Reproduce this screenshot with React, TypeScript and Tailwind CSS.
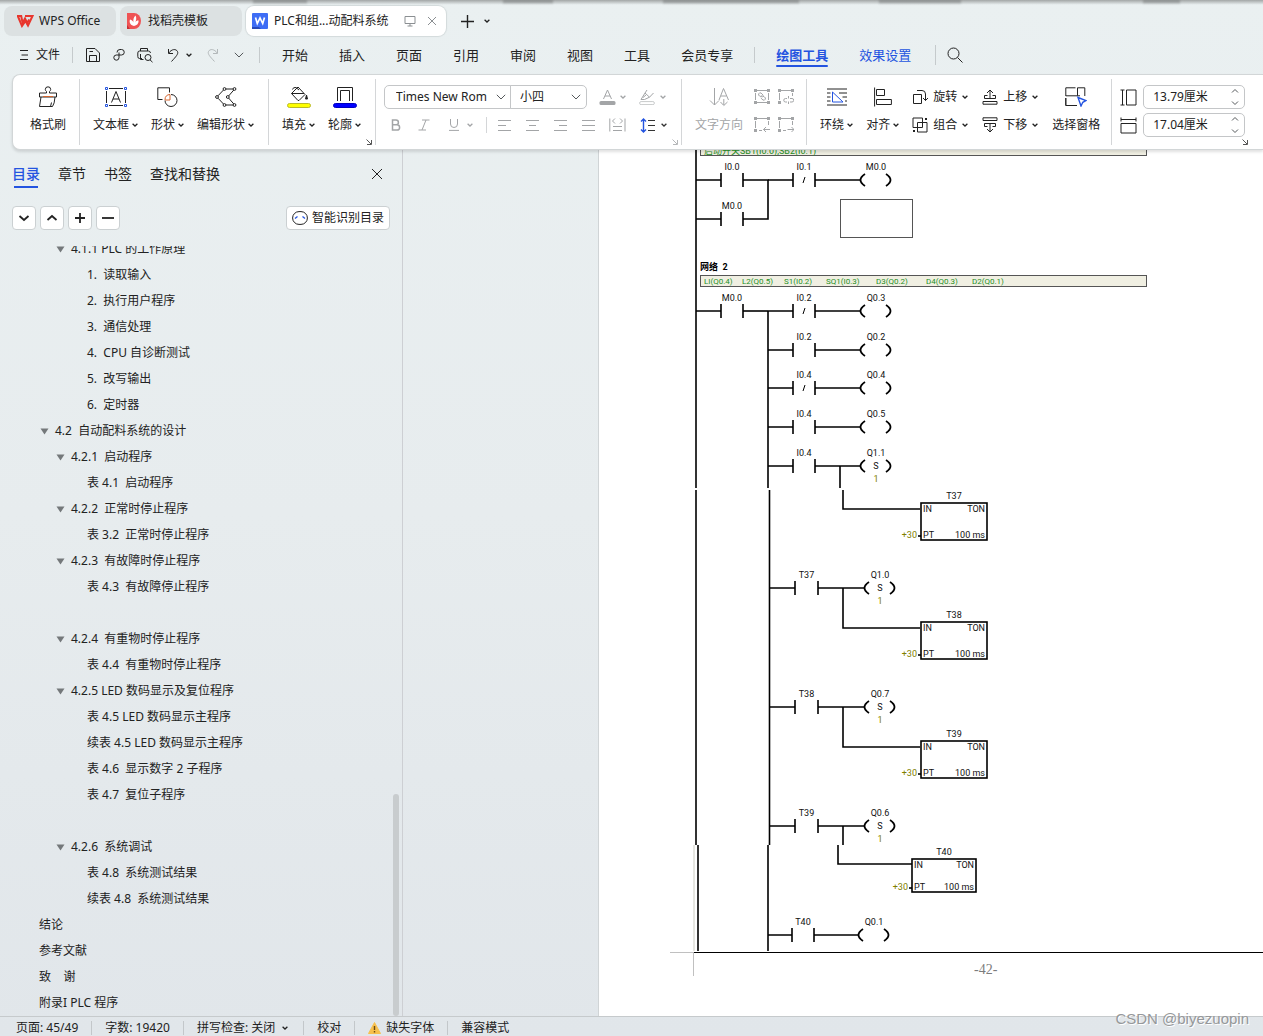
/**
 * WPS Writer window - tab strip, drawing ribbon, outline pane and page view
 */

import { useState } from 'react';
import type { ReactNode } from 'react';

const BLUE = '#2454e0';

/* ---------- small shared pieces ---------- */

function Icon({ w = 16, h = 16, className = '', children }: { w?: number; h?: number; className?: string; children: ReactNode }) {
  return (
    <svg width={w} height={h} viewBox={`0 0 ${w} ${h}`} fill="none" stroke="currentColor" strokeWidth="1" className={`shrink-0 ${className}`} aria-hidden="true">
      {children}
    </svg>
  );
}

function Caret({ className = '' }: { className?: string }) {
  return (
    <Icon w={6} h={6} className={className}>
      <path d="M0.6 1.8L3 4L5.4 1.8" strokeWidth="1.3" />
    </Icon>
  );
}

function WideCaret() {
  return (
    <Icon w={10} h={6} className="text-[#55595c]">
      <path d="M0.8 0.8L5 5L9.2 0.8" />
    </Icon>
  );
}

function Launcher({ className = '' }: { className?: string }) {
  return (
    <button className={`absolute right-1 bottom-1 ${className}`} aria-label="更多设置">
      <Icon w={6} h={6}>
        <path d="M0.5 0.5L5 5M5.5 1V5.5H1" strokeWidth="1" />
      </Icon>
    </button>
  );
}

function BigButton({ label, caret = false, icon, className = '' }: { label: string; caret?: boolean; icon: ReactNode; className?: string }) {
  return (
    <button className={`flex flex-col items-center gap-1 ${className}`}>
      <span className="flex h-6 items-center justify-center">{icon}</span>
      <span className="flex h-6 items-center gap-[3px] whitespace-nowrap">
        {label}
        {caret && <Caret />}
      </span>
    </button>
  );
}

function RowButton({ label, icon }: { label: string; icon: ReactNode }) {
  return (
    <button className="flex h-6 items-center gap-[5px] pr-px whitespace-nowrap">
      {icon}
      {label}
      <Caret />
    </button>
  );
}

function Group({ className = '', children }: { className?: string; children: ReactNode }) {
  return (
    <div className={`relative flex h-full shrink-0 pt-[10px] after:absolute after:top-1 after:right-0 after:bottom-1 after:w-px after:bg-[#d4d6d8] ${className}`}>
      {children}
    </div>
  );
}

/* ---------- window tabs ---------- */

// Patches of darker shadow cast by the window behind
const shadowPatches = ['ml-[253px] w-[54px]', 'ml-[196px] w-[50px]', 'ml-[110px] w-[136px]', 'ml-[80px] w-[82px]', 'ml-[182px] w-[37px]'];

function TopShadow() {
  return (
    <div className="flex h-[6px] shrink-0 bg-linear-to-b from-[#a2a6a6] to-transparent to-80%">
      {shadowPatches.map((p) => (
        <span key={p} className={`h-1 shrink-0 bg-linear-to-b from-[#00000040] to-[#00000018] blur-[1px] ${p}`} />
      ))}
    </div>
  );
}

function TabStrip() {
  return (
    <div className="flex h-[30px] items-stretch gap-1 pl-1">
      <button className="flex w-28 items-center gap-[5px] rounded-lg bg-[#dce1e2] pl-3">
        <Icon w={18} h={14} className="text-[#e8362d]">
          <path d="M1 2H5.2L6.6 9L9 4.5L11.2 9L13.2 5.5" strokeWidth="2" />
          <path d="M9 2H16.5L12 11.5L9.5 7L6 12L2 2.5" strokeWidth="2" />
        </Icon>
        WPS Office
      </button>
      <button className="flex w-[122px] items-center gap-[7px] rounded-lg bg-[#dce1e2] pl-[7px]">
        <Icon w={14} h={16}>
          <path d="M0 0H7A7 8 0 0 1 7 16H0Z" fill="#ef5354" stroke="none" />
          <path d="M7 13C3 12 2 9 3 6.5C5 7 6 8 6.5 9.5C6 7 6.5 4.5 8.5 2.5C9.8 5 9.3 7.5 8 9.5C9 8 10 7.4 11.6 7.5C11.8 10.5 10 12.5 7 13Z" fill="#fff" stroke="none" />
          <path d="M0 12L3 16H0Z" fill="#c92f33" stroke="none" />
        </Icon>
        找稻壳模板
      </button>
      <div className="flex w-[200px] items-center rounded-lg bg-white pl-[6px] shadow-[0_0_1px_1px_#d3dadb]">
        <Icon w={16} h={16}>
          <rect width="16" height="16" rx="1" fill="#3e6df5" stroke="none" />
          <path d="M0 14H7L9 16H0Z" fill="#2748b8" stroke="none" />
          <path d="M3.5 4.5L5.3 10.5L8 5L10.7 10.5L12.5 4.5" stroke="#fff" strokeWidth="1.7" />
        </Icon>
        <span className="ml-[6px] whitespace-nowrap">PLC和组...动配料系统</span>
        <Icon w={12} h={12} className="ml-auto text-[#8b8f92]">
          <path d="M1 1.5H11V8.5H1ZM3.5 11H8.5M6 8.5V11" />
        </Icon>
        <button className="mr-[9px] ml-[11px] text-[#8b8f92]" aria-label="关闭标签">
          <Icon w={10} h={10}>
            <path d="M1 1L9 9M9 1L1 9" />
          </Icon>
        </button>
      </div>
      <button className="ml-[10px]" aria-label="新建">
        <Icon w={15} h={15}>
          <path d="M7.5 1V14M1 7.5H14" strokeWidth="1.4" />
        </Icon>
      </button>
      <button className="ml-[5px]" aria-label="标签列表">
        <Caret />
      </button>
    </div>
  );
}

/* ---------- quick access and ribbon tabs ---------- */

const ribbonTabs = ['开始', '插入', '页面', '引用', '审阅', '视图', '工具', '会员专享'];

function MenuBar() {
  return (
    <div className="flex h-[38px] items-center pl-[19px]">
      <button className="flex items-center gap-[7px] text-[12px]">
        <Icon w={10} h={12}>
          <path d="M1 1.5H9M2.5 6H9M1 10.5H9" />
        </Icon>
        文件
      </button>
      <span className="ml-3 h-4 w-px bg-[#c5cacc]" />
      <button className="ml-3" aria-label="保存">
        <Icon>
          <path d="M1.5 1.5H10L14.5 6V14.5H1.5ZM4.5 14.5V8.5H11.5V14.5M4.5 4.5H8" />
        </Icon>
      </button>
      <button className="ml-[10px]" aria-label="输出为PDF">
        <Icon>
          <path d="M6 5.5Q6 2.5 9 2.5H10.5A2.7 2.7 0 0 1 10.5 8H5.2A2.6 2.6 0 1 0 8 10.8V5.5" />
        </Icon>
      </button>
      <button className="ml-[10px]" aria-label="打印预览">
        <Icon>
          <path d="M3.5 4V1.5H10.5V4M5 11.5H2.5Q0.8 11.5 0.8 9.5V6Q0.8 4 2.5 4H11.5Q13.2 4 13.5 6M3.5 7V12.5H6.5" />
          <circle cx="11" cy="10.5" r="3" />
          <path d="M13 12.8L15.5 15.2" />
        </Icon>
      </button>
      <button className="ml-3" aria-label="撤销">
        <Icon>
          <path d="M3.5 2V6.5H8M3.8 6C6.5 2 11 1.5 12.5 4.5C13.6 7 11 9.5 6.5 14.5" />
        </Icon>
      </button>
      <button className="ml-[5px]" aria-label="撤销列表">
        <Caret />
      </button>
      <button className="ml-[13px] text-[#b3b8ba]" aria-label="恢复">
        <Icon>
          <path d="M12.5 2V6.5H8M12.2 6C9.5 2 5 1.5 3.5 4.5C2.4 7 5 9.5 9.5 14.5" />
        </Icon>
      </button>
      <button className="ml-[13px]" aria-label="自定义工具栏">
        <WideCaret />
      </button>
      <span className="ml-[15px] h-4 w-px bg-[#c5cacc]" />
      <nav className="ml-[22px] flex items-center gap-[31px] text-[13px] whitespace-nowrap">
        {ribbonTabs.map((tab) => (
          <button key={tab}>{tab}</button>
        ))}
      </nav>
      <span className="ml-[21px] h-4 w-px bg-[#c5cacc]" />
      <button className="relative ml-[21px] text-[13px] font-bold whitespace-nowrap text-[#2454e0] after:absolute after:inset-x-0 after:-bottom-1 after:h-[2px] after:rounded after:bg-[#2454e0]">
        绘图工具
      </button>
      <button className="ml-[31px] text-[13px] whitespace-nowrap text-[#2454e0]">效果设置</button>
      <span className="ml-6 h-5 w-px bg-[#c5cacc]" />
      <button className="ml-[11px]" aria-label="搜索">
        <Icon>
          <circle cx="6.5" cy="6.5" r="5.5" />
          <path d="M10.5 10.5L15.5 15.5" />
        </Icon>
      </button>
    </div>
  );
}

/* ---------- ribbon ---------- */

const alignLines = [
  { name: '左对齐', d: 'M1 1.5H14M1 6.5H9M1 11.5H14' },
  { name: '居中', d: 'M1 1.5H14M4 6.5H11M1 11.5H14' },
  { name: '右对齐', d: 'M1 1.5H14M6 6.5H14M1 11.5H14' },
  { name: '两端对齐', d: 'M1 1.5H14M1 6.5H14M1 11.5H14' },
];

const fullFrame = 'M3 1.5H13M1.5 4V11M14.5 4V11M3 13.5H13';
const openFrame = 'M3 1.5H13M1.5 4V11M14.5 4V8M5 13.5H8';
const fullCorners = 'M0 1.5H3M13 1.5H16M0 13.5H3M13 13.5H16';
const openCorners = 'M0 1.5H3M13 1.5H16M0 13.5H3';

const linkIcons = [
  { name: '创建文本框链接', frame: fullFrame, corners: fullCorners, d: 'M8.5 8L5.5 7A1.6 1.6 0 0 1 7 4L9.5 6.5M7.5 6.5L10.5 8A1.6 1.6 0 0 1 9 11L6.8 9' },
  { name: '断开文本框链接', frame: 'M3 1.5H13M1.5 4V11M14.5 4V7', corners: openCorners, d: 'M9 9.5H7.5A1.5 1.5 0 0 0 7.5 13H9M12 9.5H14A1.5 1.5 0 0 1 14 13H12M10.5 7V9.5M10.5 12.5V15' },
  { name: '前一文本框', frame: openFrame, corners: openCorners, d: 'M16 12.5H9.5M12 10L9.5 12.5L12 15' },
  { name: '后一文本框', frame: openFrame, corners: openCorners, d: 'M9.5 12.5H16M13.5 10L16 12.5L13.5 15' },
];

function SizeField({ label, value, icon }: { label: string; value: string; icon: ReactNode }) {
  const [size, setSize] = useState(value);
  return (
    <label className="flex h-6 items-center gap-[6px]">
      {icon}
      <span className="flex h-6 items-center rounded-[5px] border border-[#c4c6c8] pr-[5px] pl-[9px]">
        <input aria-label={label} value={size} onChange={(e) => setSize(e.target.value)} className="w-[78px] bg-transparent outline-none" />
        <Icon w={8} h={18} className="text-[#55595c]">
          <path d="M1 4.5L4 1.5L7 4.5M1 13.5L4 16.5L7 13.5" />
        </Icon>
      </span>
    </label>
  );
}

function FontControls() {
  return (
    <div className="flex flex-col gap-1">
      <div className="flex h-6 items-center">
        <div className="relative flex h-6 items-center rounded-l-[5px] border border-[#c4c6c8]">
          <select aria-label="字体" className="h-full w-[125px] appearance-none bg-transparent pl-[11px] outline-none">
            <option>Times New Rom</option>
          </select>
          <span className="pointer-events-none absolute right-1 flex">
            <WideCaret />
          </span>
        </div>
        <div className="relative -ml-px flex h-6 items-center rounded-r-[5px] border border-[#c4c6c8]">
          <select aria-label="字号" className="h-full w-[75px] appearance-none bg-transparent pl-[9px] outline-none">
            <option>小四</option>
          </select>
          <span className="pointer-events-none absolute right-[5px] flex">
            <WideCaret />
          </span>
        </div>
        <button className="ml-3 flex items-center gap-1 text-[#a3a5a7]" aria-label="字体颜色">
          <Icon w={17} h={16}>
            <path d="M4.5 10L8.5 1L12.5 10M6 7H11" />
            <rect x="0.5" y="12" width="16" height="4" rx="1.5" fill="currentColor" stroke="none" />
          </Icon>
          <Caret />
        </button>
        <button className="ml-[13px] flex items-center gap-[5px] text-[#a3a5a7]" aria-label="突出显示">
          <Icon w={16} h={16}>
            <path d="M2 10.5L6 4L10.5 8.2L5.5 10.5ZM6 4L8 1M10.5 8.2L14.5 4M4 8.5L7 6" />
            <rect x="0.6" y="12.6" width="14.8" height="3" rx="1.5" stroke="#c8cacb" />
          </Icon>
          <Caret />
        </button>
      </div>
      <div className="flex h-6 items-center pl-[7px] text-[#a3a5a7]">
        <button aria-label="加粗">
          <Icon w={10} h={12}>
            <path d="M1.5 1H5A2.4 2.4 0 0 1 5 5.8H1.5ZM1.5 5.8H6A2.6 2.6 0 0 1 6 11H1.5Z" strokeWidth="1.5" />
          </Icon>
        </button>
        <button className="ml-[17px]" aria-label="倾斜">
          <Icon w={12} h={12}>
            <path d="M4 1H11.5M0.5 11H8M8 1L4 11" />
          </Icon>
        </button>
        <button className="ml-[18px] flex items-center gap-[7px]" aria-label="下划线">
          <Icon w={12} h={12}>
            <path d="M2.5 0V5Q2.5 8.5 6 8.5T9.5 5V0M1 11.4H11" />
          </Icon>
          <Caret />
        </button>
        <span className="ml-[13px] h-4 w-px bg-[#d4d6d8]" />
        <span className="ml-[10px] flex gap-[13px]">
          {alignLines.map((a) => (
            <button key={a.name} aria-label={a.name}>
              <Icon w={15} h={13}>
                <path d={a.d} />
              </Icon>
            </button>
          ))}
          <button aria-label="分散对齐">
            <Icon w={17} h={14}>
              <path d="M0.8 0.5V13.5M16 0.5V13.5M6 0.5L3.5 3L6 5.5M11 0.5L13.5 3L11 5.5M4 8.5H13M4 12.5H13" />
            </Icon>
          </button>
        </span>
        <button className="ml-[14px] flex items-center gap-[6px] text-[#333]" aria-label="行距">
          <Icon w={15} h={15}>
            <path d="M3.5 1V14M1 3.5L3.5 1L6 3.5M1 11.5L3.5 14L6 11.5" stroke={BLUE} strokeWidth="1.4" />
            <path d="M8 2.5H15M8 7.5H15M8 12.5H15" />
          </Icon>
          <Caret />
        </button>
      </div>
    </div>
  );
}

function Ribbon() {
  return (
    <div className="relative z-10 ml-3 flex h-[76px] rounded-l-lg border-y border-l border-[#d2d6d7] bg-white shadow-[0_2px_3px_#0000001f]">
      <Group className="pr-[14px] pl-[17px]">
        <BigButton
          label="格式刷"
          icon={
            <Icon w={20} h={22}>
              <path d="M8.5 7V5.5Q7.3 4.5 7.3 3.5A2.6 2.6 0 0 1 12.7 3.5Q12.7 4.5 11.5 5.5V7H18.5V11H1.5V7ZM3 11L1.5 20.5H14.5Q16.5 18 17 11M12.5 20.5L13.5 16.5" />
              <path d="M5 10.5H15" stroke="#d4652f" />
            </Icon>
          }
        />
      </Group>
      <Group className="gap-[13px] pr-[15px] pl-[13px]">
        <BigButton
          label="文本框"
          caret
          icon={
            <Icon w={22} h={20}>
              <path d="M4 1.5H18M4 18.5H18M1.5 4V16M20.5 4V16M6.5 15.5L11 4.5L15.5 15.5M8 12H14" />
              <path d="M0.5 0.5H2.5V2.5H0.5ZM19.5 0.5H21.5V2.5H19.5ZM0.5 17.5H2.5V19.5H0.5ZM19.5 17.5H21.5V19.5H19.5Z" stroke={BLUE} />
            </Icon>
          }
        />
        <BigButton
          label="形状"
          caret
          icon={
            <Icon w={21} h={20}>
              <path d="M5.5 12.5H0.8V0.8H12.5V5.5M14 7.5A6 6 0 1 1 8 13.5" />
              <path d="M8 13V12.5C8 9.5 10 7.5 13 7.5V13Z" stroke="#d4652f" />
            </Icon>
          }
        />
        <BigButton
          label="编辑形状"
          caret
          icon={
            <Icon w={22} h={20}>
              <path d="M8.5 3L3 8.8M3 11.2L8.5 17M11 2H18M11 18H18M18.8 3L13.6 9M13.6 11L18.8 17" />
              <circle cx="9.5" cy="2" r="1.4" />
              <circle cx="19.5" cy="2" r="1.4" />
              <circle cx="2" cy="10" r="1.4" />
              <circle cx="12.8" cy="10" r="1.4" />
              <circle cx="9.5" cy="18" r="1.4" />
              <circle cx="19.5" cy="18" r="1.4" />
            </Icon>
          }
        />
      </Group>
      <Group className="gap-[13px] pr-[15px] pl-[13px]">
        <BigButton
          label="填充"
          caret
          icon={
            <Icon w={24} h={22}>
              <path d="M4.5 7.5L11 1L18 8.5L12 14.5H11ZM4.5 7.5H17M5.5 3.5Q6 1 9 1.5L12 4" />
              <path d="M19.5 9L20.5 13H18.5Z" fill="currentColor" />
              <rect x="0.5" y="17.5" width="23" height="4" rx="2" fill="#ffff00" stroke="#b9b92a" />
            </Icon>
          }
        />
        <BigButton
          label="轮廓"
          caret
          icon={
            <Icon w={24} h={22}>
              <path d="M4.5 15V1.5H19.5V15M7.5 15V4.5H16.5V15" />
              <rect x="0.5" y="17.5" width="23" height="4" rx="2" fill="#0000ff" stroke="#0000c0" />
            </Icon>
          }
        />
        <Launcher className="text-[#555]" />
      </Group>
      <Group className="pr-[15px] pl-2">
        <FontControls />
        <Launcher className="text-[#b5b7b9]" />
      </Group>
      <Group className="gap-[11px] pr-[13px] pl-[13px]">
        <BigButton
          label="文字方向"
          className="text-[#a3a5a7]"
          icon={
            <Icon w={21} h={20}>
              <path d="M5.5 1V18M1 13.5L5.5 18L10 13.5M10 13L14.5 1.5L19.5 13M12 9H17.5M14.8 12V18M11.5 15L14.8 18.5L18.5 15" />
            </Icon>
          }
        />
        <div className="grid h-[52px] grid-cols-2 gap-x-2 gap-y-1 text-[#a3a5a7]">
          {linkIcons.map((l) => (
            <button key={l.name} aria-label={l.name} className="flex h-6 items-center">
              <Icon w={16} h={16}>
                <path d={l.frame} strokeWidth="1" />
                <path d={l.corners} strokeWidth="3" />
                <path d={l.d} />
              </Icon>
            </button>
          ))}
        </div>
      </Group>
      <Group className="gap-[13px] pr-3 pl-[13px]">
        <BigButton
          label="环绕"
          caret
          icon={
            <Icon w={20} h={18}>
              <path d="M0 1H20M0 5H3.5M0 9H3.5M0 13H3.5M0 17H20M12 5H20M15.5 9H20M18 13H20" />
              <path d="M5.5 4V14H16Z" stroke={BLUE} />
            </Icon>
          }
        />
        <BigButton
          label="对齐"
          caret
          icon={
            <Icon w={18} h={20}>
              <path d="M0.6 0.5V19.5M2.5 2.5H10.5V8.5H2.5ZM2.5 12.5H17.4V17.5H2.5Z" />
            </Icon>
          }
        />
        <div className="flex flex-col gap-1">
          <RowButton
            label="旋转"
            icon={
              <Icon>
                <path d="M1.5 5.5H9.5V14.5H1.5ZM5 1.5H10Q13.5 1.5 13.5 5V11.5M11 9L13.5 11.5L16 9" />
              </Icon>
            }
          />
          <RowButton
            label="组合"
            icon={
              <Icon>
                <path d="M1 1H10.5V10.5H1ZM5.5 5.5H15V15H5.5Z" />
                <path d="M13 2H15M1 14H3" strokeWidth="2" />
              </Icon>
            }
          />
        </div>
        <div className="flex flex-col gap-1">
          <RowButton
            label="上移"
            icon={
              <Icon>
                <path d="M8 1V10M5 4L8 1L11 4M5.5 6.5H2.5V9.5H13.5V6.5H10.5M1 12.5H15V15.2H1Z" />
              </Icon>
            }
          />
          <RowButton
            label="下移"
            icon={
              <Icon>
                <path d="M8 6V15M5 12L8 15L11 12M5.5 9.5H2.5V6.5H13.5V9.5H10.5M1 0.8H15V3.5H1Z" />
              </Icon>
            }
          />
        </div>
        <BigButton
          label="选择窗格"
          icon={
            <Icon w={22} h={20}>
              <path d="M0.8 9V0.8H10.5M0.8 8.8H12.5V0.8M12.5 0.8H19.8V9M15 8.8H12.5M0.8 11V18.5H12M0.8 18.5V11" />
              <path d="M13 10.5L21 13.5L17.8 15.3L16 19Z" stroke={BLUE} strokeWidth="1.4" />
            </Icon>
          }
        />
      </Group>
      <div className="relative flex min-w-[136px] flex-col gap-1 pt-[10px] pl-2">
        <SizeField
          label="高度"
          value="13.79厘米"
          icon={
            <Icon w={17} h={17}>
              <path d="M2.5 1V16M0.5 1H4.5M0.5 16H4.5M6.5 1H16V16H6.5Z" />
            </Icon>
          }
        />
        <SizeField
          label="宽度"
          value="17.04厘米"
          icon={
            <Icon w={17} h={17}>
              <path d="M1 2.5H16M1 0.5V4.5M16 0.5V4.5M1 6.5H16V16H1Z" />
            </Icon>
          }
        />
        <Launcher className="left-[130px] text-[#555]" />
      </div>
    </div>
  );
}

/* ---------- outline pane ---------- */

type OutlineItem = { text: string; level: number; open?: boolean };

const outline: OutlineItem[] = [
  { text: '4.1.1 PLC 的工作原理', level: 2, open: true },
  { text: '1.  读取输入', level: 3 },
  { text: '2.  执行用户程序', level: 3 },
  { text: '3.  通信处理', level: 3 },
  { text: '4.  CPU 自诊断测试', level: 3 },
  { text: '5.  改写输出', level: 3 },
  { text: '6.  定时器', level: 3 },
  { text: '4.2  自动配料系统的设计', level: 1, open: true },
  { text: '4.2.1  启动程序', level: 2, open: true },
  { text: '表 4.1  启动程序', level: 3 },
  { text: '4.2.2  正常时停止程序', level: 2, open: true },
  { text: '表 3.2  正常时停止程序', level: 3 },
  { text: '4.2.3  有故障时停止程序', level: 2, open: true },
  { text: '表 4.3  有故障停止程序', level: 3 },
  { text: '', level: 3 },
  { text: '4.2.4  有重物时停止程序', level: 2, open: true },
  { text: '表 4.4  有重物时停止程序', level: 3 },
  { text: '4.2.5 LED 数码显示及复位程序', level: 2, open: true },
  { text: '表 4.5 LED 数码显示主程序', level: 3 },
  { text: '续表 4.5 LED 数码显示主程序', level: 3 },
  { text: '表 4.6  显示数字 2 子程序', level: 3 },
  { text: '表 4.7  复位子程序', level: 3 },
  { text: '', level: 3 },
  { text: '4.2.6  系统调试', level: 2, open: true },
  { text: '表 4.8  系统测试结果', level: 3 },
  { text: '续表 4.8  系统测试结果', level: 3 },
  { text: '结论', level: 0 },
  { text: '参考文献', level: 0 },
  { text: '致    谢', level: 0 },
  { text: '附录I PLC 程序', level: 0 },
];

const indents = ['pl-6', 'pl-10', 'pl-14', 'pl-[72px]'];

const outlineTools = [
  { name: '展开', d: 'M1.5 4L6 8L10.5 4' },
  { name: '折叠', d: 'M1.5 8L6 4L10.5 8' },
  { name: '提升级别', d: 'M6 1V11M1 6H11' },
  { name: '降低级别', d: 'M0 6H12' },
];

function OutlinePane() {
  return (
    <aside className="flex w-[403px] shrink-0 flex-col border-r border-[#cdcfd3]">
      <div className="flex h-12 items-center gap-[18px] pr-[19px] pl-3 text-[14px]">
        <button className="relative font-medium text-[#2454e0] after:absolute after:inset-x-[2px] after:-bottom-[6px] after:h-[2px] after:bg-[#2454e0]">目录</button>
        <button>章节</button>
        <button>书签</button>
        <button>查找和替换</button>
        <button className="ml-auto" aria-label="关闭">
          <Icon w={12} h={12}>
            <path d="M1 1L11 11M11 1L1 11" />
          </Icon>
        </button>
      </div>
      <div className="mt-2 flex gap-1 pr-3 pl-3">
        {outlineTools.map((t) => (
          <button key={t.name} aria-label={t.name} className="flex size-6 items-center justify-center rounded border border-[#cbd0d2] bg-white">
            <Icon w={12} h={12}>
              <path d={t.d} strokeWidth="1.8" />
            </Icon>
          </button>
        ))}
        <button className="ml-auto flex h-6 items-center gap-1 rounded border border-[#cbd0d2] bg-white px-[5px]">
          <Icon w={16} h={14}>
            <rect x="0.6" y="0.6" width="14.8" height="12.8" rx="6.4" />
            <path d="M3 7.5L5.5 5.5M13 7.5L10.5 5.5" stroke={BLUE} strokeWidth="1.3" />
          </Icon>
          智能识别目录
        </button>
      </div>
      <div className="mt-4 flex min-h-0 flex-1 justify-between overflow-hidden">
        <ul className="-mt-[10px]">
          {outline.map((item, i) => (
            <li key={i} className={`flex h-[26px] items-center whitespace-pre ${indents[item.level]}`}>
              <span className="flex w-[15px] shrink-0">
                {item.open && (
                  <Icon w={9} h={7}>
                    <path d="M0.5 0.5H8.5L4.5 6.5Z" fill="#74787a" stroke="none" />
                  </Icon>
                )}
              </span>
              {item.text}
            </li>
          ))}
        </ul>
        <span className="mr-[3px] h-[222px] w-[6px] self-end rounded bg-[#c8ccce]" />
      </div>
    </aside>
  );
}

/* ---------- ladder diagram ---------- */

function Txt({ x, y, anchor = 'middle', fill = '#111', children }: { x: number; y: number; anchor?: 'start' | 'middle' | 'end'; fill?: string; children: ReactNode }) {
  return (
    <text x={x} y={y + 3} textAnchor={anchor} fill={fill} stroke="none">
      {children}
    </text>
  );
}

// Contact with its two bars, the wire up to it and the label above
function Contact({ from, x, y, label, closed = false, width = 22 }: { from: number; x: number; y: number; label: string; closed?: boolean; width?: number }) {
  return (
    <g>
      <path d={`M${from} ${y}H${x}M${x} ${y - 7}V${y + 7}M${x + width} ${y - 7}V${y + 7}`} />
      {closed && <path d={`M${x + 10} ${y + 3}L${x + 12} ${y - 3}`} strokeWidth="1" />}
      <Txt x={x + width / 2} y={y - 13}>{label}</Txt>
    </g>
  );
}

// Output coil; a set coil carries an S and the bit count below
function Coil({ from, x, y, label, set = false }: { from: number; x: number; y: number; label: string; set?: boolean }) {
  return (
    <g>
      <path d={`M${from} ${y}H${x}`} />
      <path d={`M${x + 5} ${y - 6}Q${x - 4} ${y} ${x + 5} ${y + 6}M${x + 26} ${y - 6}Q${x + 35} ${y} ${x + 26} ${y + 6}`} strokeWidth="1.8" />
      <Txt x={x + 16} y={y - 13}>{label}</Txt>
      {set && <Txt x={x + 16} y={y}>S</Txt>}
      {set && <Txt x={x + 16} y={y + 13} fill="#808000">1</Txt>}
    </g>
  );
}

function Timer({ x, y, w, h, label }: { x: number; y: number; w: number; h: number; label: string }) {
  return (
    <g>
      <rect x={x} y={y} width={w} height={h} />
      <path d={`M${x - 3} ${y + h - 4}H${x}`} />
      <Txt x={x + w / 2} y={y - 7}>{label}</Txt>
      <Txt x={x + 2} y={y + 6} anchor="start">IN</Txt>
      <Txt x={x + w - 2} y={y + 6} anchor="end">TON</Txt>
      <Txt x={x + 2} y={y + h - 5} anchor="start">PT</Txt>
      <Txt x={x + w - 2} y={y + h - 5} anchor="end">100 ms</Txt>
      <Txt x={x - 4} y={y + h - 5} anchor="end" fill="#808000">+30</Txt>
    </g>
  );
}

const rungs = [
  { y: 311, input: 'I0.2', output: 'Q0.3', closed: true },
  { y: 350, input: 'I0.2', output: 'Q0.2' },
  { y: 388, input: 'I0.4', output: 'Q0.4', closed: true },
  { y: 427, input: 'I0.4', output: 'Q0.5' },
  { y: 466, input: 'I0.4', output: 'Q1.1', set: true },
];

const timedRungs = [
  { y: 588, input: 'T37', output: 'Q1.0' },
  { y: 707, input: 'T38', output: 'Q0.7' },
  { y: 826, input: 'T39', output: 'Q0.6' },
];

const tags = [
  { x: 704, text: 'LI(Q0.4)' },
  { x: 742, text: 'L2(Q0.5)' },
  { x: 784, text: 'S1(I0.2)' },
  { x: 826, text: 'SQ1(I0.3)' },
  { x: 876, text: 'D3(Q0.2)' },
  { x: 926, text: 'D4(Q0.3)' },
  { x: 972, text: 'D2(Q0.1)' },
];

function LadderDiagram() {
  return (
    <svg
      width="455"
      height="802"
      viewBox="693 150 455 802"
      fill="none"
      stroke="#000"
      strokeWidth="1.6"
      className="ml-[94px] block shrink-0 font-['Roboto','Noto_Sans_CJK_SC',sans-serif] text-[9px]"
    >
      {/* rails */}
      <path d="M694 845V951" stroke="#e6e6e1" strokeWidth="2" />
      <path d="M696 150V488M696 490V845M698 845V951" stroke="#333" strokeWidth="2" />
      <path d="M768 311V488M769.5 490V845M768 845V951" />

      {/* network 1 */}
      <rect x="700.5" y="143.5" width="446" height="12" fill="#f0efe2" stroke="#555" strokeWidth="1" />
      <Txt x={704} y={151} anchor="start" fill="#1f8f1f">启动开关SB1(I0.0),</Txt>
      <Txt x={779} y={151} anchor="start" fill="#1f8f1f">SB2(I0.1)</Txt>
      <Contact from={696} x={721} y={180} label="I0.0" />
      <path d="M743 180H768V219H743" />
      <Contact from={768} x={793} y={180} label="I0.1" closed />
      <Coil from={815} x={860} y={180} label="M0.0" />
      <Contact from={696} x={721} y={219} label="M0.0" />
      <rect x="840.5" y="199.5" width="72" height="38" stroke="#555" strokeWidth="1" />

      {/* network 2 */}
      <text x="700" y="270" fill="#000" stroke="none" className="font-bold whitespace-pre">网络  2</text>
      <rect x="700.5" y="275.5" width="446" height="11" fill="#f0efe2" stroke="#555" strokeWidth="1" />
      <g className="text-[8px]">
        {tags.map((t) => (
          <Txt key={t.x} x={t.x} y={281} anchor="start" fill="#1f8f1f">{t.text}</Txt>
        ))}
      </g>
      <Contact from={696} x={721} y={311} label="M0.0" />
      <path d="M743 311H768" />
      {rungs.map((r) => (
        <g key={r.y}>
          <Contact from={768} x={793} y={r.y} label={r.input} closed={r.closed} />
          <Coil from={815} x={860} y={r.y} label={r.output} set={r.set} />
        </g>
      ))}
      <path d="M840 466V488M843 490V509H920" />
      <Timer x={921} y={503} w={66} h={37} label="T37" />

      {/* timer chain */}
      {timedRungs.map((r) => (
        <g key={r.y}>
          <Contact from={769} x={795} y={r.y} label={r.input} width={23} />
          <Coil from={818} x={864} y={r.y} label={r.output} set />
        </g>
      ))}
      <path d="M843 588V628H920M843 707V747H920M843 826V845M838 845V864H912" />
      <Timer x={921} y={622} w={66} h={37} label="T38" />
      <Timer x={921} y={741} w={66} h={37} label="T39" />
      <Timer x={912} y={859} w={64} h={33} label="T40" />
      <Contact from={768} x={792} y={935} label="T40" />
      <Coil from={814} x={858} y={935} label="Q0.1" />
    </svg>
  );
}

function PageView() {
  return (
    <main className="ml-[195px] flex min-w-0 flex-1 flex-col overflow-hidden border-l border-[#d0d4d6] bg-white">
      <LadderDiagram />
      <div className="flex pl-[71px]">
        <span className="h-6 w-6 shrink-0 border-t border-r border-[#c0c0c0]" />
        <footer className="flex-1 border-t border-black pt-[7px] pl-[280px] font-['Liberation_Serif',serif] text-[14px] leading-5 text-[#7c7c7c]">-42-</footer>
      </div>
    </main>
  );
}

/* ---------- status bar ---------- */

function StatusBar() {
  const divider = <span className="h-[14px] w-px bg-[#c3c7ca]" />;
  return (
    <div className="flex h-5 shrink-0 items-center gap-[13px] border-t border-[#c6cacc] pt-[3px] pl-4 whitespace-nowrap">
      <span>页面: 45/49</span>
      {divider}
      <span>字数: 19420</span>
      {divider}
      <button className="mr-[2px] flex items-center gap-[7px]">
        拼写检查: 关闭
        <Caret />
      </button>
      {divider}
      <button>校对</button>
      {divider}
      <button className="flex items-center gap-[5px]">
        <Icon w={13} h={12}>
          <path d="M6.5 0.5L12.5 11.5H0.5Z" fill="#f7c04d" stroke="#f7c04d" />
          <path d="M6.5 4V8M6.5 9V10.5" stroke="#6b4a12" strokeWidth="1.4" />
        </Icon>
        缺失字体
      </button>
      {divider}
      <button>兼容模式</button>
    </div>
  );
}

export default function App() {
  return (
    <div className="relative flex h-screen flex-col overflow-hidden bg-linear-to-b from-[#eaf0f1] via-[#e7ecee] to-[#e1e6ea] font-['Noto_Sans','Noto_Sans_CJK_SC',sans-serif] text-[12px] leading-4 text-[#222]">
      <TopShadow />
      <TabStrip />
      <MenuBar />
      <Ribbon />
      <div className="flex min-h-0 flex-1">
        <OutlinePane />
        <PageView />
      </div>
      <StatusBar />
      <div className="pointer-events-none absolute right-[14px] bottom-[7px] font-['Liberation_Sans',sans-serif] text-[15px] leading-5 text-[#96989a] [text-shadow:1px_1px_0_#fff]">CSDN @biyezuopin</div>
    </div>
  );
}
